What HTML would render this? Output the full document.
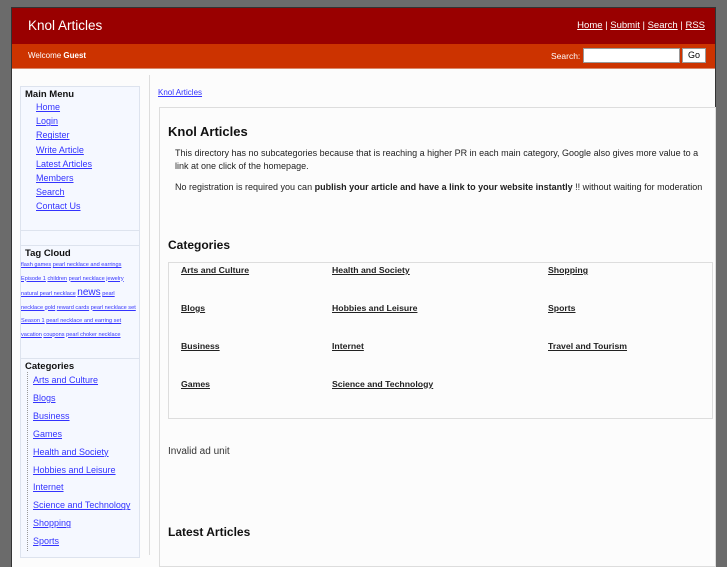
<!DOCTYPE html>
<html><head><style>
*{margin:0;padding:0;box-sizing:border-box}
body{width:727px;height:545px;overflow:hidden;background:#6b6b6b;font-family:"Liberation Sans",Arial,sans-serif;position:relative}
.wrap{position:absolute;left:11px;top:7px;width:705px;height:560px;background:#fcfcfc;border:1px solid #333;border-bottom:none}
.hdr{position:absolute;left:0;top:0;width:703px;height:36px;background:#990000}
.hdr .t{position:absolute;left:16px;top:10px;color:#fff;font-size:13.5px}
.hdr .n{position:absolute;right:10px;top:12px;color:#fff;font-size:9.5px}
.hdr .n a{color:#fff}
.bar{position:absolute;left:0;top:36px;width:703px;height:25px;background:#cc3300;border-bottom:1px solid #d9886a}
.bar .w{position:absolute;left:16px;top:7px;color:#fff;font-size:8px}
.bar .s{position:absolute;left:539px;top:7px;color:#fff;font-size:8.5px}
.bar .in{position:absolute;left:571px;top:4px;width:97px;height:15px;background:#fff;border:1px solid #999}
.bar .go{position:absolute;left:670px;top:4px;width:24px;height:15px;background:#fff;border:1px solid #999;font-size:9px;text-align:center;line-height:13px;color:#000}
a{color:#33f;text-decoration:underline}
.side{position:absolute;left:20px;width:120px;background:#f5f8ff;border:1px solid #dde3ee}
.side h4{font-size:9.5px;color:#111;margin:2px 0 0 4px}
.menu a{display:block;font-size:9px;margin-left:15px;line-height:14.2px}
.tags{font-size:5.6px;line-height:13.5px}
.cats a{display:block;font-size:9px;line-height:17.9px;margin-left:5px}
.cats{border-left:1px dotted #999;margin-left:6px}
.div{position:absolute;left:149px;top:75px;width:1px;height:480px;background:#ddd}
.main{position:absolute;left:159px;top:107px;width:557px;height:460px;background:#fcfcfc;border:1px solid #ddd}
.main h2{position:absolute;left:8px;font-size:13px;color:#111}
.main p{position:absolute;left:15px;font-size:9px;color:#222;line-height:13px;width:534px}
.cb{position:absolute;left:8px;top:154px;width:545px;height:157px;border:1px solid #ddd}
.cb a{position:absolute;font-size:8.7px;font-weight:bold;color:#222}
</style></head><body>
<div class="wrap">
<div class="hdr"><div class="t">Knol Articles</div><div class="n"><a>Home</a> | <a>Submit</a> | <a>Search</a> | <a>RSS</a></div></div>
<div class="bar"><div class="w">Welcome <b>Guest</b></div><div class="s">Search:</div><div class="in"></div><div class="go">Go</div></div>
</div>
<div class="side" style="top:86px;height:145px"><h4>Main Menu</h4><div class="menu"><a>Home</a><a>Login</a><a>Register</a><a>Write Article</a><a>Latest Articles</a><a>Members</a><a>Search</a><a>Contact Us</a></div></div>
<div class="side" style="top:230px;height:16px"></div>
<div class="side" style="top:245px;height:114px"><h4>Tag Cloud</h4><div class="tags"><a>flash games</a> <a>pearl necklace and earrings</a> <a>Episode 1</a> <a>children</a> <a>pearl necklace jewelry</a> <a>natural pearl necklace</a> <a style="font-size:10px">news</a> <a>pearl</a><br><a>necklace gold</a> <a>reward cards</a> <a>pearl necklace set</a> <a>Season 1</a> <a>pearl necklace and earring set</a> <a>vacation</a> <a>coupons</a> <a>pearl choker necklace</a></div></div>
<div class="side" style="top:358px;height:200px"><h4>Categories</h4><div class="cats"><a>Arts and Culture</a><a>Blogs</a><a>Business</a><a>Games</a><a>Health and Society</a><a>Hobbies and Leisure</a><a>Internet</a><a>Science and Technology</a><a>Shopping</a><a>Sports</a></div></div>
<div class="div"></div>
<a style="position:absolute;left:158px;top:88px;font-size:8px">Knol Articles</a>
<div class="main">
<h2 style="top:16px">Knol Articles</h2>
<p style="top:39px">This directory has no subcategories because that is reaching a higher PR in each main category, Google also gives more value to a link at one click of the homepage.</p>
<p style="top:73px">No registration is required you can <b>publish your article and have a link to your website instantly</b> !! without waiting for moderation</p>
<h2 style="top:130px;font-size:12px">Categories</h2>
<div class="cb">
<a style="left:12px;top:2px">Arts and Culture</a><a style="left:163px;top:2px">Health and Society</a><a style="left:379px;top:2px">Shopping</a>
<a style="left:12px;top:40px">Blogs</a><a style="left:163px;top:40px">Hobbies and Leisure</a><a style="left:379px;top:40px">Sports</a>
<a style="left:12px;top:78px">Business</a><a style="left:163px;top:78px">Internet</a><a style="left:379px;top:78px">Travel and Tourism</a>
<a style="left:12px;top:116px">Games</a><a style="left:163px;top:116px">Science and Technology</a>
</div>
<div style="position:absolute;left:8px;top:338px;font-size:10px;color:#333">Invalid ad unit</div>
<h2 style="top:417px;font-size:12px">Latest Articles</h2>
</div>
</body></html>
